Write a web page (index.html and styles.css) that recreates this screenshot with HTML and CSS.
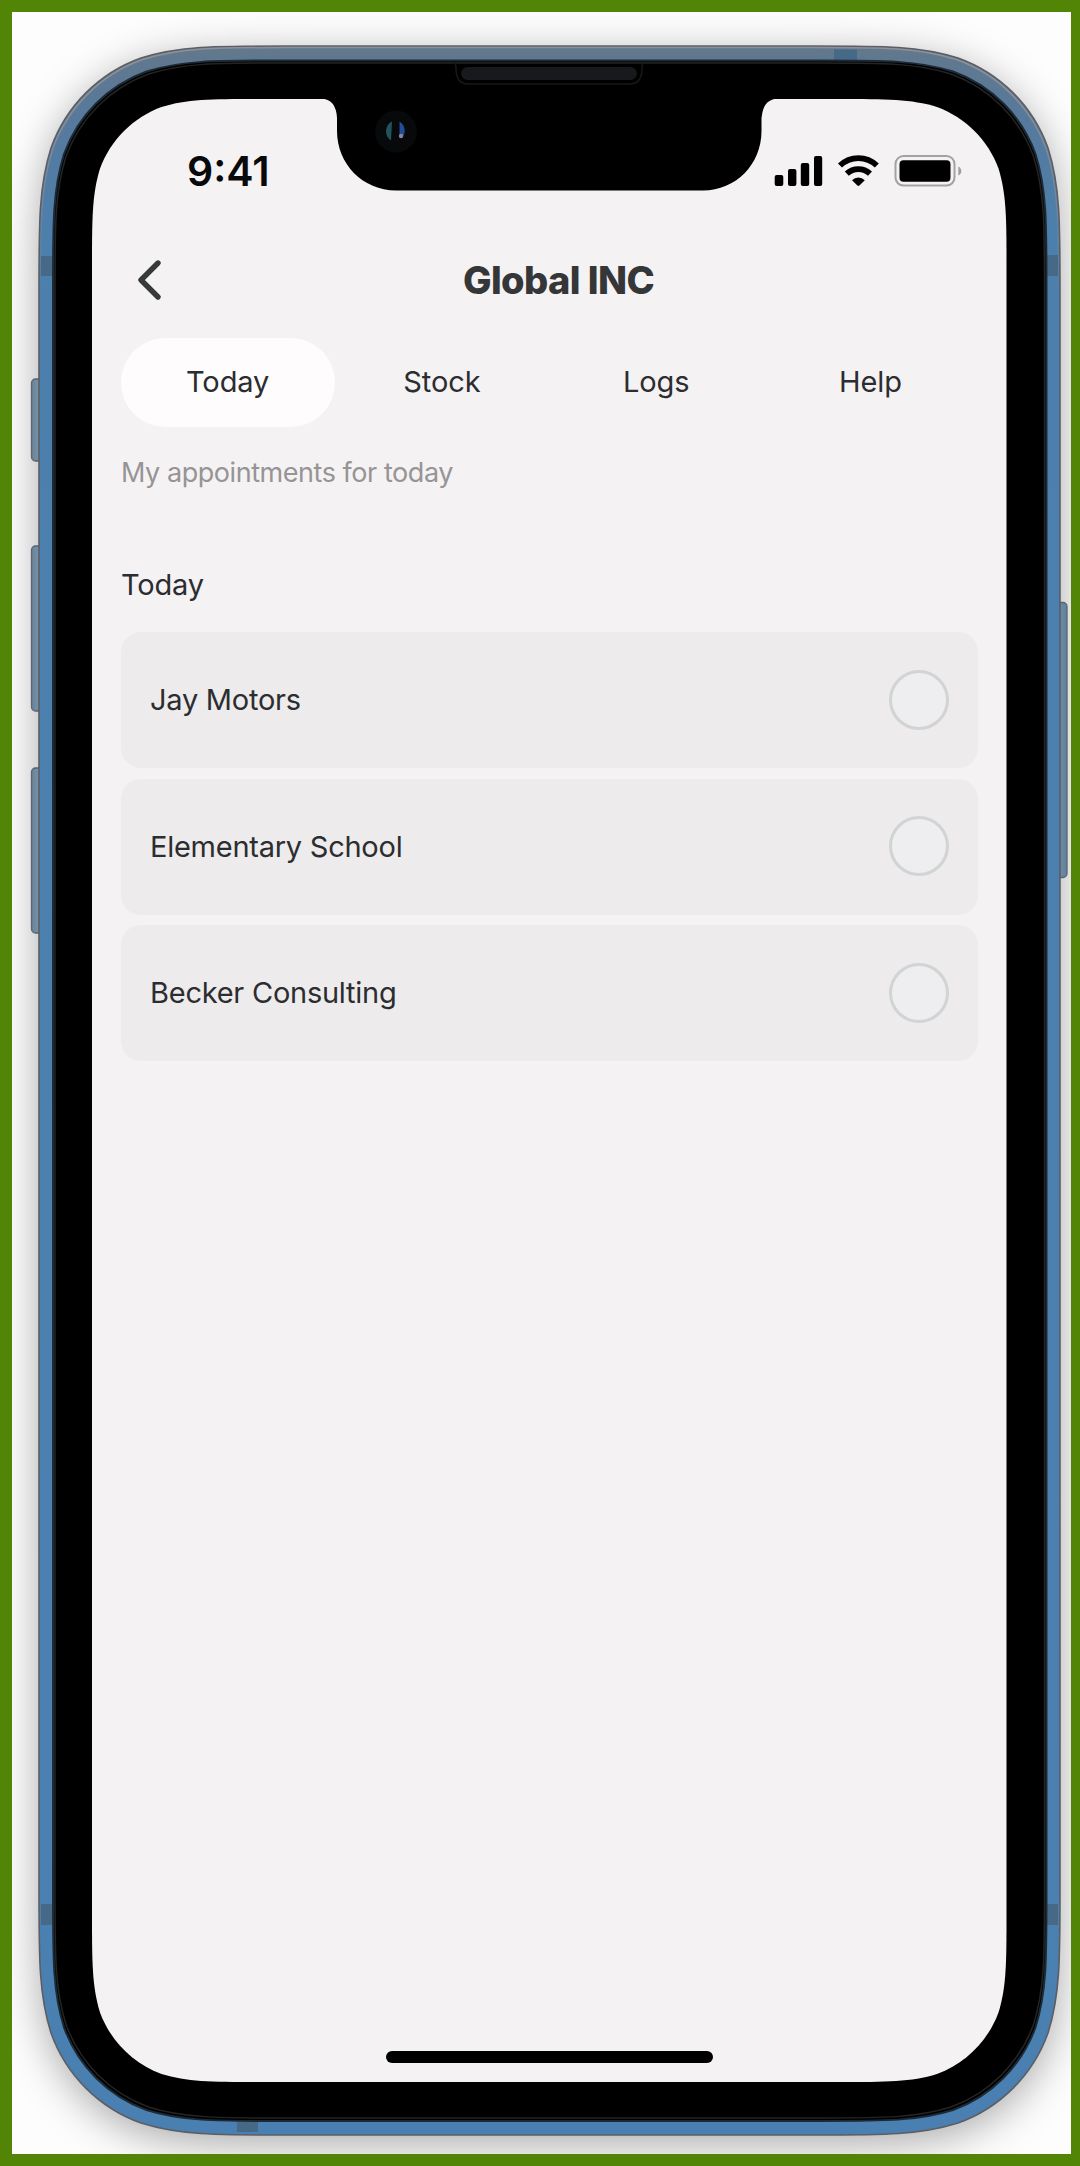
FILE: index.html
```html
<!DOCTYPE html>
<html lang="en">
<head>
<meta charset="utf-8">
<title>Global INC</title>
<link rel="stylesheet" href="styles.css">
</head>
<body>
<div class="stage">
  <svg class="device" viewBox="0 0 1059 2142" aria-hidden="true">
    <defs>
      <linearGradient id="rail" x1="0" y1="0" x2="0" y2="1">
        <stop offset="0" stop-color="#62788c"/>
        <stop offset="0.03" stop-color="#58799a"/>
        <stop offset="0.09" stop-color="#4c7fac"/>
        <stop offset="1" stop-color="#4a80b1"/>
      </linearGradient>
      <linearGradient id="key" x1="0" y1="0" x2="1" y2="0">
        <stop offset="0" stop-color="#7b92a6"/>
        <stop offset="0.4" stop-color="#86aac6"/>
        <stop offset="0.6" stop-color="#7fa3c0"/>
        <stop offset="1" stop-color="#6f93b2"/>
      </linearGradient>
      <linearGradient id="shine" x1="0" y1="0" x2="0" y2="1">
        <stop offset="0.2" stop-color="#8d9096"/>
        <stop offset="1" stop-color="#8d9096" stop-opacity="0"/>
      </linearGradient>
    </defs>
    <g transform="translate(-12 -12)">
      <!-- side keys -->
      <g fill="url(#key)" stroke="#6a7380" stroke-width="1.3">
        <rect x="31.500" y="379" width="14" height="82" rx="4"/>
        <rect x="31.500" y="546" width="14" height="165" rx="4"/>
        <rect x="31.500" y="768" width="14" height="165" rx="4"/>
        <rect x="1053" y="602.500" width="14" height="275" rx="4"/>
      </g>
      <!-- metal rail -->
      <path class="rail" fill="url(#rail)" stroke="#5c5e64" stroke-width="1.6" d="M285 46H814c71 0 106 0 144 12c42 15 75 48 90 90c12 38 12 73 12 144V1889c0 71 0 106-12 144c-15 42-48 75-90 90c-38 12-73 12-144 12H285c-71 0-106 0-144-12c-42-15-75-48-90-90c-12-38-12-73-12-144V292c0-71 0-106 12-144c15-42 48-75 90-90c38-12 73-12 144-12z"/>
      <path fill="none" stroke="url(#shine)" stroke-width="1.500" d="M40.500 293.500c0-71 0-106 12-144c15-42 48-75 90-90c38-12 73-12 144-12H812.500c71 0 106 0 144 12c42 15 75 48 90 90c12 38 12 73 12 144"/>
      <g fill="#466988">
        <rect x="41" y="256" width="12" height="20"/><rect x="1047" y="255" width="11" height="21"/>
        <rect x="834" y="49.500" width="23" height="11"/><rect x="237" y="2122" width="21" height="10"/>
        <rect x="41" y="1904" width="12" height="21"/><rect x="1047" y="1904" width="11" height="21"/>
      </g>
      <!-- bezel -->
      <path fill="#000" stroke="#1c2a35" stroke-width="2" d="M279 60.500H820.500c65 0 97.500 0 132.500 11c38.500 14 68.500 44 82.500 82.500c11 35 11 67.500 11 132.500V1895c0 65 0 97.500-11 132.500c-14 38.500-44 68.500-82.500 82.500c-35 11-67.500 11-132.500 11H279c-65 0-97.500 0-132.500-11c-38.500-14-68.500-44-82.500-82.500c-11-35-11-67.500-11-132.500V286.500c0-65 0-97.500 11-132.500c14-38.500 44-68.500 82.500-82.500c35-11 67.500-11 132.500-11z"/>
      <path fill="#000" stroke="#242424" stroke-width="1.500" d="M281 63H818.500c65 0 97.500 0 132.500 11c38.500 14 68.500 44 82.500 82.500c11 35 11 67.500 11 132.500V1892c0 65 0 97.500-11 132.500c-14 38.500-44 68.500-82.500 82.500c-35 11-67.500 11-132.500 11H281c-65 0-97.500 0-132.500-11c-38.500-14-68.500-44-82.500-82.500c-11-35-11-67.500-11-132.500V289c0-65 0-97.500 11-132.500c14-38.500 44-68.500 82.500-82.500c35-11 67.500-11 132.500-11z"/>
      <!-- display -->
      <path fill="#f5f2f3" d="M260 99H838.500c48 0 72.500 0 98.500 8c28.500 10.500 51 33 61.500 61.500c8 26 8 50.500 8 98.500V1914c0 48 0 72.500-8 98.500c-10.500 28.500-33 51-61.500 61.500c-26 8-50.500 8-98.500 8H260c-48 0-72.500 0-98.500-8c-28.500-10.500-51-33-61.500-61.500c-8-26-8-50.500-8-98.500V267c0-48 0-72.500 8-98.500c10.500-28.500 33-51 61.500-61.500c26-8 50.500-8 98.500-8z"/>
      <!-- notch, speaker, camera -->
      <path d="M321 98.500Q336 99 337 118V131C337 164 363 190.500 396 190.500H703C736 190.500 761.500 164 761.500 131V118Q763 99 778 98.500z"/>
      <path fill="none" stroke="#15191b" stroke-width="1.500" d="M454 62q2 2 2 6c0 11 4 16 12 16h162c8 0 12-5 12-16q0-4 2-6"/>
      <rect x="461" y="67" width="176" height="13" rx="6.500" fill="#17191c"/>
      <circle cx="396" cy="131.500" r="21" fill="#08090a"/>
      <path d="M392 121.500a11 11 0 0 0-1 19z" fill="#22545d"/>
      <path d="M399.500 121.500a11 11 0 0 1 3 16l-3-3z" fill="#234b96"/>
      <circle cx="401" cy="136" r="2.200" fill="#85849d"/>
    </g>
  </svg>

  <main class="screen">
    <header class="status">
      <span class="clock">9:41</span>
      <svg class="indicators" width="190" height="34" viewBox="774 154 190 34" aria-hidden="true">
        <g>
          <rect x="774.700" y="175" width="8.600" height="11" rx="2"/>
          <rect x="788" y="169" width="8.400" height="17" rx="2"/>
          <rect x="800.800" y="163" width="8.400" height="23" rx="2"/>
          <rect x="814" y="156" width="8.200" height="30" rx="2"/>
        </g>
        <g fill="none" stroke="#000" stroke-width="5.800">
          <path d="M840 165.500a26.500 26.500 0 0 1 36.800 0"/>
          <path d="M846.800 173.600a17 17 0 0 1 23.200 0"/>
        </g>
        <path d="M852 180.200a9 9 0 0 1 12.800 0l-5.400 5.300q-1 .8-2 0z"/>
        <rect x="895.500" y="156" width="59" height="29.600" rx="8" fill="none" stroke="#a3a1a4" stroke-width="2"/>
        <rect x="899.500" y="160.300" width="51" height="21.400" rx="4"/>
        <path d="M958.300 166.500q3 1.500 3 4.500t-3 4.500z" fill="#a09fa2"/>
      </svg>
    </header>

    <div class="titlebar">
      <svg class="back" width="26" height="44" viewBox="0 0 26 44" aria-label="Back"><path d="M21 5L4 22l17 17"/></svg>
      <h1 class="title">Global INC</h1>
    </div>

    <nav class="tabs">
      <span class="tab tab-active">Today</span>
      <span class="tab">Stock</span>
      <span class="tab">Logs</span>
      <span class="tab">Help</span>
    </nav>

    <p class="hint">My appointments for today</p>
    <h2 class="section">Today</h2>

    <ul class="list">
      <li class="item"><span>Jay Motors</span><i class="check"></i></li>
      <li class="item"><span>Elementary School</span><i class="check"></i></li>
      <li class="item"><span>Becker Consulting</span><i class="check"></i></li>
    </ul>

    <div class="home"></div>
  </main>
</div>
</body>
</html>
```
FILE: styles.css
```css
* { box-sizing: border-box; }

body {
  margin: 0;
  font-family: Inter, "Liberation Sans", sans-serif;
  color: #2b2d30;
}

.stage {
  display: grid;
  width: 1080px;
  height: 2166px;
  border: solid #528405;
  border-width: 12px 9px 12px 12px;
  background: #fdfdfe;
  overflow: hidden;
}

.device {
  grid-area: 1 / 1;
  display: block;
  width: 1059px;
  height: 2142px;
}

.rail { filter: drop-shadow(0 9px 20px rgba(0, 0, 0, .32)); }

.screen {
  grid-area: 1 / 1;
  display: flex;
  flex-direction: column;
  width: 914px;
  height: 1983px;
  margin: 87px 0 0 80px;
  padding: 46px 28px 19px 29px;
}

.status {
  display: flex;
  justify-content: space-between;
  align-items: center;
  height: 52px;
  padding: 0 14px 0 66px;
}

.clock {
  color: #08090a;
  font-size: 41px;
  font-weight: 600;
  line-height: 53px;
}

.titlebar {
  display: grid;
  grid-template-columns: 60px 1fr 60px;
  align-items: center;
  height: 60px;
  margin-top: 53px;
  padding-left: 16px;
}

.back {
  fill: none;
  stroke: #37393b;
  stroke-width: 5.4;
  stroke-linecap: round;
  stroke-linejoin: round;
}

.title {
  margin: 0;
  padding-left: 2px;
  color: #343638;
  font-size: 38px;
  font-weight: 800;
  line-height: 60px;
  letter-spacing: -.6px;
  text-align: center;
}

.tabs {
  display: grid;
  grid-template-columns: repeat(4, 1fr);
  height: 89px;
  margin-top: 28px;
}

.tab {
  padding-right: 1px;
  border-radius: 45px;
  font-size: 29px;
  font-weight: 400;
  line-height: 88px;
  letter-spacing: -.1px;
  text-align: center;
}

.tab-active { background: #fefcfd; }

.hint {
  margin: 26px 0 0;
  color: #969496;
  font-size: 27px;
  font-weight: 400;
  line-height: 40px;
  letter-spacing: -.45px;
}

.section {
  margin: 71px 0 0;
  font-size: 29px;
  font-weight: 400;
  line-height: 42px;
  letter-spacing: -.2px;
}

.list {
  display: grid;
  gap: 10.5px;
  margin: 26px 0 0;
  padding: 0;
  list-style: none;
}

.item {
  display: flex;
  justify-content: space-between;
  align-items: center;
  height: 136px;
  padding: 0 29px 1px;
  border-radius: 20px;
  background: #edebec;
  font-size: 29px;
  font-weight: 400;
  letter-spacing: -.25px;
}

.check {
  width: 60px;
  height: 60px;
  border: 3px solid #d2d3d4;
  border-radius: 50%;
  background: #eeedef;
}

.home {
  width: 327px;
  height: 12px;
  margin: auto auto 0 265px;
  border-radius: 6px;
  background: #000;
}
```
